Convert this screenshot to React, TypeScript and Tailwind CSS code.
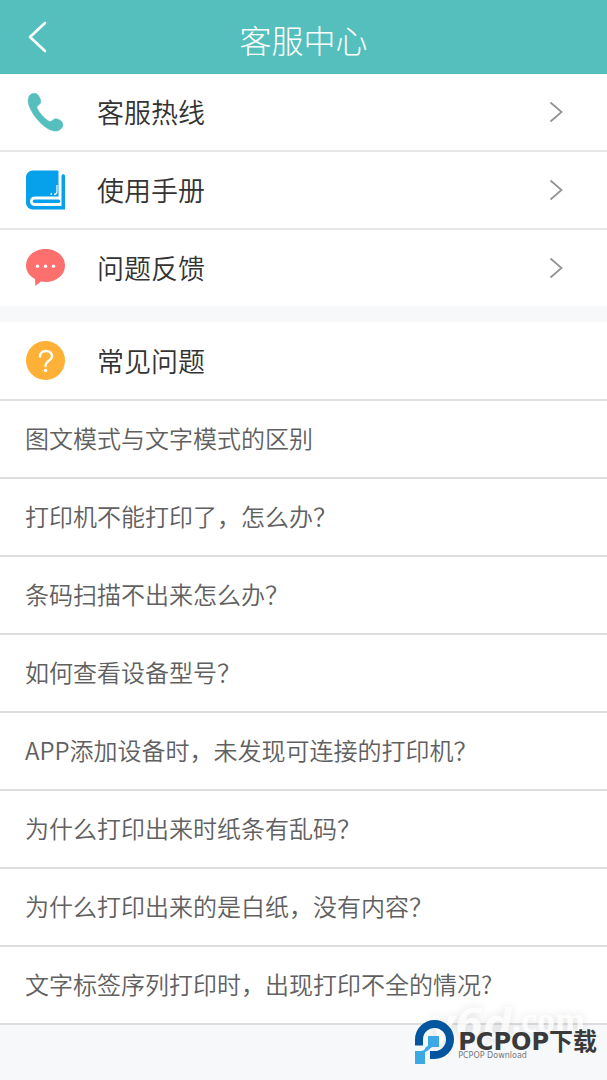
import type { ReactNode } from "react";

type MenuItem = {
  label: string;
  icon: ReactNode;
};

const PhoneIcon = () => (
  <svg viewBox="0 0 40 40" className="size-10" aria-hidden="true">
    <path
      d="M3 4.500C4.500 1.500 9 0.200 11.500 2.500C13.500 4.500 15.300 8.500 14.800 10.500C14.200 12.700 10.800 13.500 11 15.500C12 19.500 18.500 27 23.500 29.500C26 30 27 26.800 29.500 26.800C33 26.800 36.800 29.500 37 32.500C37.200 35.500 34 38.500 30.500 39C25.500 39.300 20.500 36.500 15 31.500C8 24.500 3.500 16.500 2.300 11C1.900 8.500 2.100 6.300 3 4.500Z"
      fill="#55bfbd"
      stroke="#55bfbd"
      strokeWidth="0.500"
    />
  </svg>
);

const BookIcon = () => (
  <svg viewBox="0 0 40 40" className="size-10" fill="none" aria-hidden="true">
    <path
      d="M7 0.500H31.500Q32.500 0.500 32.500 1.500V26.500H8.500C2.500 26.500 2.500 36 8.500 36H35.500V6C35.500 3.500 39 3.500 39 6V39.500H7C3 39.500 0 36.500 0 32.500V7.500C0 3.500 3 0.500 7 0.500Z"
      fill="#07a0ea"
    />
    <path d="M8.500 31.200H32.500" stroke="#07a0ea" strokeWidth="3.500" strokeLinecap="round" />
    <path d="M31 15V21Q31 24.300 28 24.300" stroke="#fff" strokeWidth="1.200" />
    <path d="M24.500 24h1.500" stroke="#fff" strokeWidth="1.500" />
  </svg>
);

const FeedbackIcon = () => (
  <svg viewBox="0 0 40 40" className="size-10" aria-hidden="true">
    <path
      d="M19.500 1C30.500 1 39 8 39 17.500C39 27 30.500 34 19.500 34C18 34 16.500 33.800 15 33.500L9.300 38L9 31C3.500 28 0 23.500 0 17.500C0 8 8.500 1 19.500 1Z"
      fill="#fd706d"
    />
    <circle cx="11.500" cy="18.200" r="1.700" fill="#fff" />
    <circle cx="19.500" cy="18.200" r="1.700" fill="#fff" />
    <circle cx="27.500" cy="18.200" r="1.700" fill="#fff" />
  </svg>
);

const QuestionIcon = () => (
  <svg viewBox="0 0 40 40" className="size-10" aria-hidden="true">
    <circle cx="19.500" cy="19.500" r="19.500" fill="#ffb036" />
    <path
      d="M14 15.500C14 12 16.500 10 20 10C23.500 10 26 12 26 15.500C26 19.500 19.500 20 19.500 25"
      fill="none"
      stroke="#fff"
      strokeWidth="2.400"
      strokeLinecap="round"
    />
    <circle cx="19.500" cy="29.500" r="1.800" fill="#fff" />
  </svg>
);

const ArrowRight = () => (
  <svg viewBox="0 0 14 22" className="h-[22px] w-[14px]" fill="none" aria-hidden="true">
    <path d="M1.500 1.500L12.500 11L1.500 20.500" stroke="#949494" strokeWidth="1.800" />
  </svg>
);

const menu: MenuItem[] = [
  { label: "客服热线", icon: <PhoneIcon /> },
  { label: "使用手册", icon: <BookIcon /> },
  { label: "问题反馈", icon: <FeedbackIcon /> },
];

const questions = [
  "图文模式与文字模式的区别",
  "打印机不能打印了，怎么办？",
  "条码扫描不出来怎么办？",
  "如何查看设备型号？",
  "APP添加设备时，未发现可连接的打印机？",
  "为什么打印出来时纸条有乱码？",
  "为什么打印出来的是白纸，没有内容？",
  "文字标签序列打印时，出现打印不全的情况?",
];

const Header = () => (
  <header className="grid h-[74px] grid-cols-[74px_1fr_74px] items-center bg-[#55bfbd] text-white">
    <button type="button" aria-label="返回" className="flex h-full items-center pl-7">
      <svg viewBox="0 0 20 32" className="h-8 w-5" fill="none" aria-hidden="true">
        <path
          d="M17 2L2 16L17 30"
          stroke="currentColor"
          strokeWidth="2.600"
          strokeLinecap="round"
          strokeLinejoin="round"
        />
      </svg>
    </button>
    <h1 className="pt-1 text-center text-[32px] leading-10 font-light">客服中心</h1>
  </header>
);

const Watermark = () => (
  <div className="pointer-events-none absolute right-[10px] bottom-4 flex items-center gap-1">
    {/* faint site mark behind the logo */}
    <div className="absolute right-3 bottom-5 flex items-start font-bold text-white/80 [text-shadow:0_0_10px_rgb(0_0_0/0.12)]">
      <span className="font-['DejaVu_Sans',sans-serif] text-[40px] leading-10 italic">y6d</span>
      <span className="font-['Liberation_Serif',serif] text-[36px] leading-8">.com</span>
    </div>
    <svg viewBox="0 0 39 44" className="relative h-11 w-[39px]" aria-hidden="true">
      <path
        d="M4 25.500V19.500A15.500 15.500 0 1 1 19.500 35H15"
        fill="none"
        stroke="#04559f"
        strokeWidth="8"
      />
      <path d="M0 27H10V31H0Z" fill="#f7f8fa" />
      <path d="M13 16H24V27H18C15 27 14 31 10 32V44H0V31H6C11 31 9 27 13 26Z" fill="#3ca9e5" />
    </svg>
    <div className="relative pt-2">
      <div className="font-['DejaVu_Sans','Noto_Sans_CJK_SC',sans-serif] text-2xl leading-5 font-bold text-[#3a3a3a]">
        PCPOP下载
      </div>
      <div className="font-['DejaVu_Sans',sans-serif] text-[8px] leading-2 text-[#777]">
        PCPOP Download
      </div>
    </div>
  </div>
);

const App = () => {
  return (
    <div className="relative min-h-screen bg-[#f7f8fa] font-['Noto_Sans_CJK_SC',sans-serif]">
      <Header />
      <main>
        <nav className="divide-y-2 divide-[#e7e7e7] bg-white">
          {menu.map(({ label, icon }) => (
            <button
              key={label}
              type="button"
              className="flex h-[78px] w-full items-center pr-11 pl-[26px] text-left last:h-[76px]"
            >
              {icon}
              <span className="ml-[31px] flex-1 text-[27px] leading-9 font-[350] text-[#333]">
                {label}
              </span>
              <ArrowRight />
            </button>
          ))}
        </nav>
        <section className="mt-4 bg-white">
          <div className="flex h-[79px] items-center border-b-2 border-[#e0e0e0] pl-[26px]">
            <QuestionIcon />
            <h2 className="ml-[31px] text-[27px] leading-9 font-[350] text-[#333]">常见问题</h2>
          </div>
          <ul>
            {questions.map((question) => (
              <li key={question} className="border-b-2 border-[#dedede]">
                <button
                  type="button"
                  className="flex h-[76px] w-full items-center px-[25px] pb-0.5 text-left text-2xl font-[350] text-[#606060]"
                >
                  {question}
                </button>
              </li>
            ))}
          </ul>
        </section>
      </main>
      <Watermark />
    </div>
  );
};

export default App;
